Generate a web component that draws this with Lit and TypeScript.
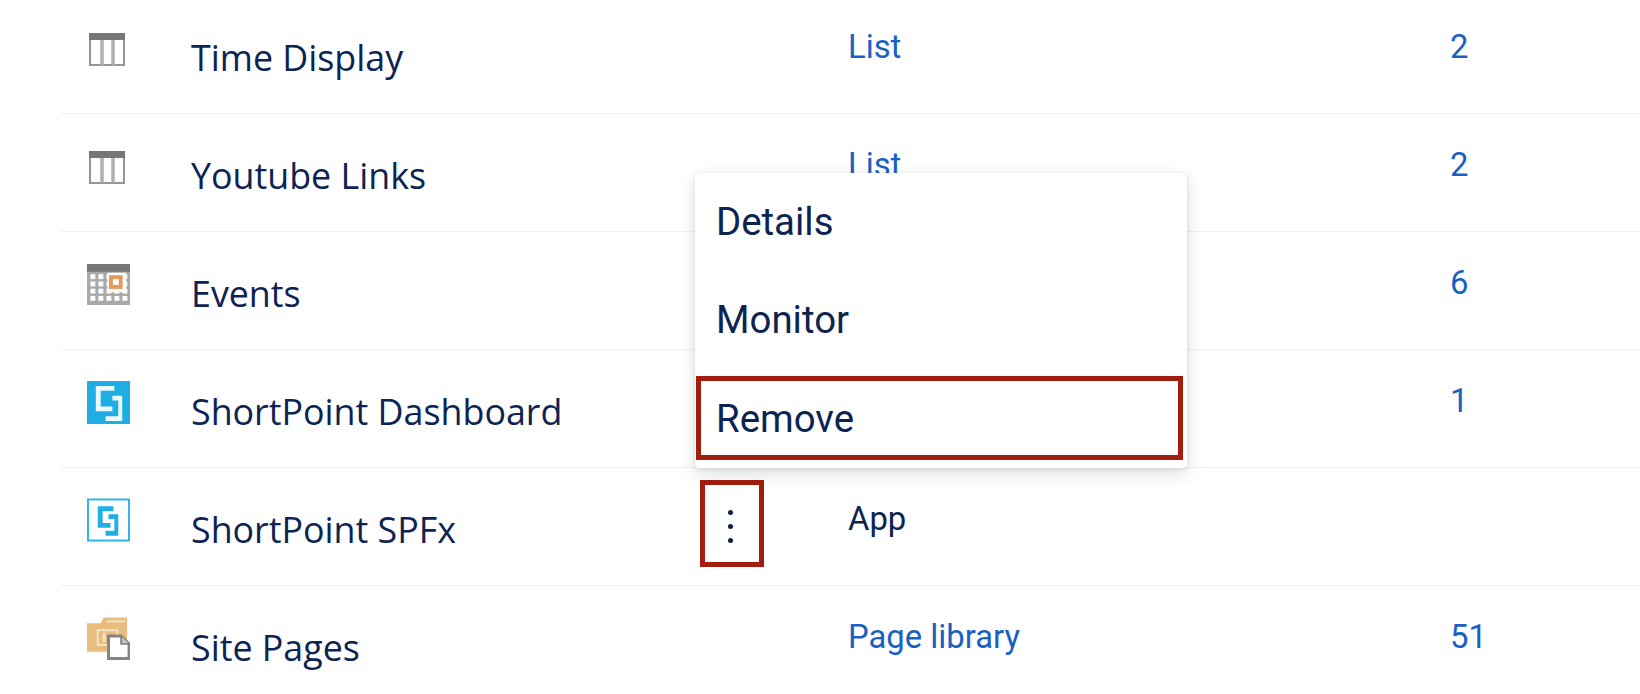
import { LitElement, html, css, svg } from "lit";
import { customElement } from "lit/decorators.js";

const tableIcon = svg`<svg class="ic table" width="36" height="33" viewBox="0 0 36 33">
  <rect x="1" y="1" width="34" height="31" fill="#fff" stroke="#959595" stroke-width="2"/>
  <rect x="0" y="0" width="36" height="7" fill="#777"/>
  <path d="M13 7v25M24 7v25" stroke="#b0b0b0" stroke-width="3.5"/></svg>`;

const calCells = [] as any[];
for (let r = 0; r < 4; r++) for (let c = 0; c < 5; c++) {
  calCells.push(svg`<rect x="${3.5 + c * 8.2}" y="${10.5 + r * 7.4}" width="5" height="5" fill="#fff"/>`);
}
const calIcon = svg`<svg class="ic cal" width="43" height="41" viewBox="0 0 44 42">
  <rect width="44" height="42" fill="#a9a9a9"/>
  <rect width="44" height="8" fill="#767676"/>
  ${calCells}
  <rect x="21" y="9" width="19" height="20" fill="#fff"/>
  <rect x="24.5" y="13.5" width="10" height="10" fill="#fff" stroke="#e69a58" stroke-width="4"/>
</svg>`;

const spFilled = svg`<svg class="ic sp" width="43" height="43" viewBox="0 0 44 44">
  <rect width="44" height="44" fill="#1eaee3"/>
  <path d="M9 5H28v5H14v16h12v5H9zM26 15h10v26H19v-5h13V20h-6z" fill="#eafaff"/>
</svg>`;
const spOutline = svg`<svg class="ic spo" width="43" height="44" viewBox="0 0 44 44">
  <rect x="1" y="1" width="42" height="42" fill="#fff" stroke="#2cb5e6" stroke-width="2"/>
  <path d="M11 8H27v5H16v12h8v5H11zM22 16h10v22H19v-5h9V21h-6z" fill="#21aee2"/>
</svg>`;
const pagesIcon = svg`<svg class="ic spo" width="43" height="44" viewBox="0 0 44 44">
  <path d="M0 7h14l3-6h24v35H0z" fill="#e9bd80"/>
  <path d="M20 4h19v2H20z" fill="#f6e3c6"/>
  <rect x="11" y="14" width="20" height="15" fill="#e9bd80" stroke="#f6e3c6" stroke-width="2"/>
  <path d="M16 17h3v9h-3z" fill="#f6e3c6"/>
  <path d="M22 20h13l8 8v15H22z" fill="#fff" stroke="#848484" stroke-width="3"/>
  <path d="M35 20v8h8" fill="#c8c8c8" stroke="#848484" stroke-width="2"/>
</svg>`;

const rows = [
  { icon: tableIcon, name: "Time Display", type: "List", count: "2", cls: "" },
  { icon: tableIcon, name: "Youtube Links", type: "List", count: "2", cls: "" },
  { icon: calIcon, name: "Events", type: "", count: "6", cls: "" },
  { icon: spFilled, name: "ShortPoint Dashboard", type: "", count: "1", cls: "" },
  { icon: spOutline, name: "ShortPoint SPFx", type: "App", count: "", cls: "app", more: true },
  { icon: pagesIcon, name: "Site Pages", type: "Page library", count: "51", cls: "" },
];

@customElement("app-root")
export class AppRoot extends LitElement {
  static styles = css`
    :host { display: block; position: relative; width: 1640px; height: 694px; overflow: hidden; background: #fff; }
    .list { margin-left: 60px; margin-top: -4px; }
    .row {
      display: grid;
      grid-template-columns: 27px 104px 509px 148px 602px 1fr;
      grid-template-rows: 117px;
      border-bottom: 1px solid #f1f1f1;
      align-items: start;
    }
    .row:last-child { border-bottom: none; }
    .ic { grid-column: 2; grid-row: 1; display: block; }
    .table { margin: 37px 0 0 2px; }
    .cal { margin-top: 32px; }
    .sp { margin-top: 31px; }
    .spo { margin-top: 30px; }
    .name {
      grid-column: 3; grid-row: 1; margin-top: 37px;
      font: 35.8px/48px "Open Sans", sans-serif; color: #0d2452; white-space: nowrap;
    }
    .more {
      grid-column: 4; grid-row: 1; justify-self: start; margin-top: 12px;
      box-sizing: border-box; width: 64px; height: 87px; padding: 6px 4px 0 0;
      border: 5px solid #a21d0e; display: flex; flex-direction: column; align-items: center; justify-content: center; gap: 9px;
      background: #fff;
    }
    .dot { width: 5px; height: 5px; border-radius: 50%; background: #0a1f44; }
    .type, .count {
      grid-row: 1; margin-top: 31px;
      font: 32.8px/40px Roboto, sans-serif; color: #1a5fc4; white-space: nowrap;
    }
    .type { grid-column: 5; }
    .count { grid-column: 6; }
    .type.app { color: #0d2452; }
    .menu {
      position: absolute; left: 695px; top: 173px; width: 492px; height: 295px;
      background: #fff; border-radius: 4px;
      box-shadow: 0 6px 18px rgba(0,0,0,.13), 0 1px 4px rgba(0,0,0,.1);
    }
    .item {
      height: 98px; box-sizing: border-box; padding-left: 21px; display: flex; align-items: center;
      font: 38.4px/48px Roboto, sans-serif; color: #0d2452;
    }
    .item.hl {
      height: 84px; margin: 203px 4px 0 1px; padding: 2px 0 0 15px;
      border: 5px solid #a21d0e; position: absolute; left: 0; right: 0; top: 0;
    }
  `;

  render() {
    return html`
      <div class="list">
        ${rows.map((r) => html`
          <div class="row">
            ${r.icon}
            <div class="name">${r.name}</div>
            ${r.more ? html`<div class="more"><span class="dot"></span><span class="dot"></span><span class="dot"></span></div>` : ""}
            <div class="type ${r.cls}">${r.type}</div>
            <div class="count">${r.count}</div>
          </div>`)}
      </div>
      <div class="menu">
        <div class="item">Details</div>
        <div class="item">Monitor</div>
        <div class="item hl">Remove</div>
      </div>
    `;
  }
}
